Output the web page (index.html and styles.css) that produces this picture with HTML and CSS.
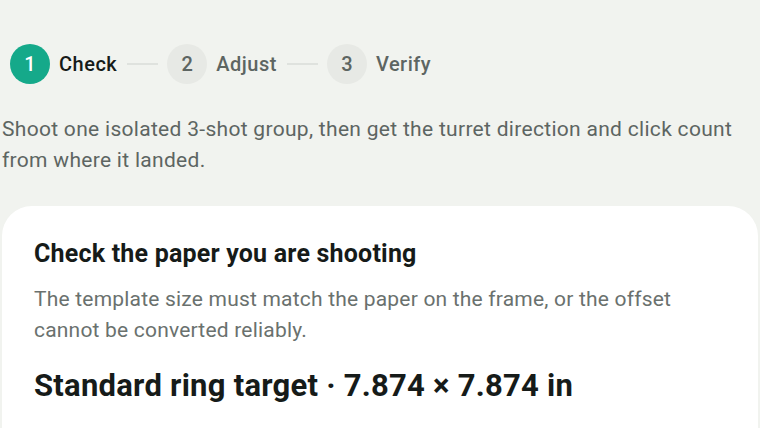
FILE: index.html
```html
<!DOCTYPE html>
<html lang="en">
<head>
<meta charset="utf-8">
<title>Zero check</title>
<link rel="stylesheet" href="styles.css">
</head>
<body>
<main class="page">
  <ol class="stepper">
    <li class="step active"><span class="num">1</span><span class="label">Check</span></li>
    <li class="sep"></li>
    <li class="step"><span class="num">2</span><span class="label">Adjust</span></li>
    <li class="sep"></li>
    <li class="step"><span class="num">3</span><span class="label">Verify</span></li>
  </ol>
  <p class="intro">Shoot one isolated 3-shot group, then get the turret direction and click count from where it landed.</p>
  <section class="card">
    <h2 class="card-title">Check the paper you are shooting</h2>
    <p class="card-desc">The template size must match the paper on the frame, or the offset cannot be converted reliably.</p>
    <h3 class="target">Standard ring target · 7.874 × 7.874 in</h3>
  </section>
</main>
</body>
</html>
```
FILE: styles.css
```css
html, body {
  margin: 0;
  padding: 0;
  background: #f1f3ef;
  font-family: Roboto, "Noto Sans", sans-serif;
  overflow: hidden;
}
.page {
  padding: 44px 2px 0 2px;
}
.stepper {
  list-style: none;
  margin: 0 0 0 8px;
  padding: 0;
  display: flex;
  align-items: center;
}
.step {
  display: flex;
  align-items: center;
  gap: 9px;
}
.num {
  width: 40px;
  height: 40px;
  border-radius: 50%;
  background: #e7e9e5;
  color: #5d6562;
  display: flex;
  align-items: center;
  justify-content: center;
  font-size: 20px;
  font-weight: 500;
}
.label {
  font-size: 20px;
  font-weight: 500;
  color: #5d6562;
  letter-spacing: 0.5px;
}
.step.active .num {
  background: #15a98a;
  color: #ffffff;
}
.step.active .label {
  color: #161b19;
}
.sep {
  width: 31px;
  height: 2px;
  background: #dfe2de;
  margin: 0 9px 0 10px;
}
.intro {
  margin: 30px 0 0 0;
  font-size: 21px;
  line-height: 31px;
  letter-spacing: 0.3px;
  color: #5d6562;
}
.card {
  margin: 30px 0 0 0;
  background: #ffffff;
  border-radius: 30px 30px 0 0;
  padding: 32px 32px 40px 32px;
  min-height: 300px;
}
.card-title {
  margin: 0;
  font-size: 25px;
  line-height: 32px;
  font-weight: 700;
  letter-spacing: 0.2px;
  color: #161b19;
}
.card-desc {
  margin: 14px 0 0 0;
  font-size: 21px;
  line-height: 31px;
  letter-spacing: 0.2px;
  color: #6a716e;
}
.target {
  margin: 20px 0 0 0;
  font-size: 31px;
  line-height: 40px;
  font-weight: 700;
  letter-spacing: 0.25px;
  color: #161b19;
}
```
